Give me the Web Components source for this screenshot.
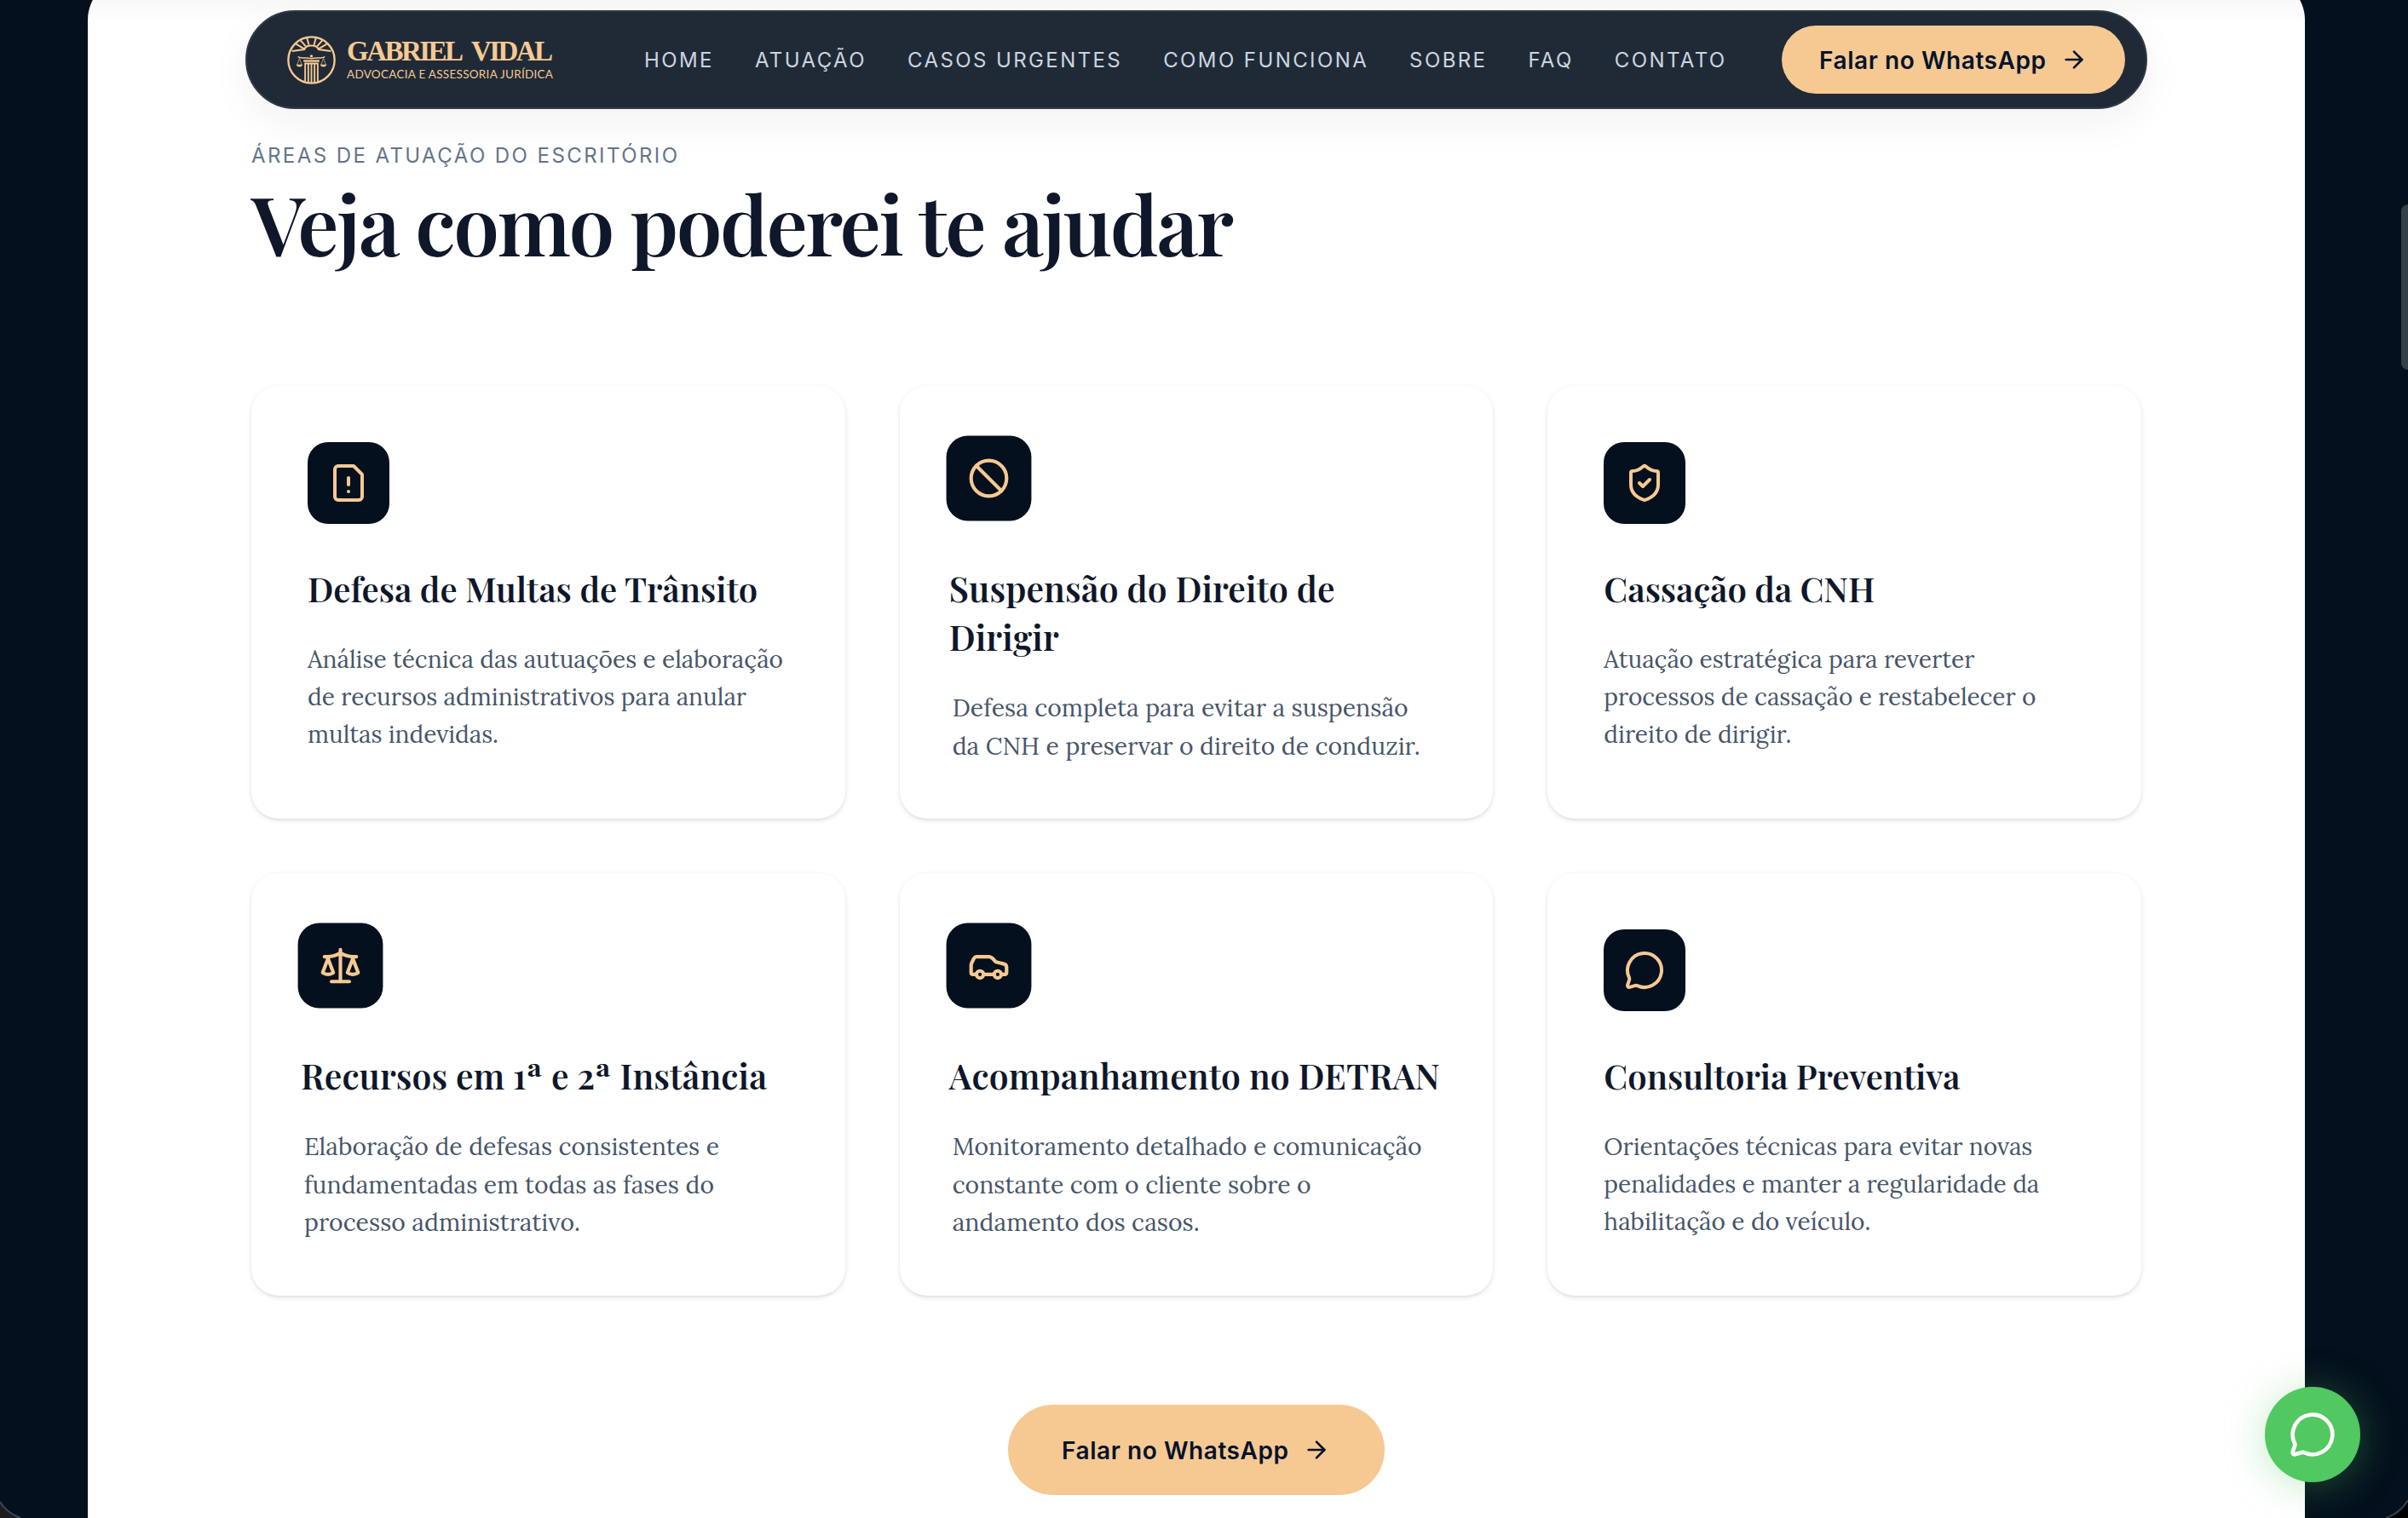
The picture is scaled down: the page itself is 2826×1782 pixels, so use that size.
<!DOCTYPE html>
<html lang="pt-BR">
<head>
<meta charset="utf-8">
<title>Gabriel Vidal – Advocacia e Assessoria Jurídica</title>
<style>
html,body{margin:0;height:1782px;overflow:hidden;background:#04101d}
body{position:relative;font-family:Inter,"Liberation Sans",sans-serif;
--serif:"Playfair Display","Liberation Serif",serif;--body:Lora,"Liberation Serif",serif;--gold:#f6c993;--ink:#0f172a}
</style>
</head>
<body>
<page-panel>
  <section-heading>
    <fit-line slot="eyebrow" w="500">ÁREAS DE ATUAÇÃO DO ESCRITÓRIO</fit-line>
    <fit-line slot="title" w="1153">Veja como poderei te ajudar</fit-line>
  </section-heading>
  <card-grid>
    <area-card icon="file">
      <fit-line slot="title" w="528">Defesa de Multas de Trânsito</fit-line>
      <fit-line w="558">Análise técnica das autuações e elaboração</fit-line>
      <fit-line w="515">de recursos administrativos para anular</fit-line>
      <fit-line w="224">multas indevidas.</fit-line>
    </area-card>
    <area-card icon="ban" lifted>
      <fit-line slot="title" w="453">Suspensão do Direito de</fit-line>
      <fit-line slot="title" w="129">Dirigir</fit-line>
      <fit-line w="535">Defesa completa para evitar a suspensão</fit-line>
      <fit-line w="549">da CNH e preservar o direito de conduzir.</fit-line>
    </area-card>
    <area-card icon="shield">
      <fit-line slot="title" w="318">Cassação da CNH</fit-line>
      <fit-line w="435">Atuação estratégica para reverter</fit-line>
      <fit-line w="507">processos de cassação e restabelecer o</fit-line>
      <fit-line w="220">direito de dirigir.</fit-line>
    </area-card>
    <area-card icon="scale" lifted>
      <fit-line slot="title" w="547">Recursos em 1ª e 2ª Instância</fit-line>
      <fit-line w="487">Elaboração de defesas consistentes e</fit-line>
      <fit-line w="481">fundamentadas em todas as fases do</fit-line>
      <fit-line w="324">processo administrativo.</fit-line>
    </area-card>
    <area-card icon="car" lifted>
      <fit-line slot="title" w="576">Acompanhamento no DETRAN</fit-line>
      <fit-line w="551">Monitoramento detalhado e comunicação</fit-line>
      <fit-line w="421">constante com o cliente sobre o</fit-line>
      <fit-line w="290">andamento dos casos.</fit-line>
    </area-card>
    <area-card icon="chat">
      <fit-line slot="title" w="418">Consultoria Preventiva</fit-line>
      <fit-line w="503">Orientações técnicas para evitar novas</fit-line>
      <fit-line w="511">penalidades e manter a regularidade da</fit-line>
      <fit-line w="313">habilitação e do veículo.</fit-line>
    </area-card>
  </card-grid>
  <cta-button large>Falar no WhatsApp</cta-button>
</page-panel>
<site-header>
  <brand-logo></brand-logo>
  <nav-menu>
    <span>HOME</span>
    <span>ATUAÇÃO</span>
    <span>CASOS URGENTES</span>
    <span>COMO FUNCIONA</span>
    <span>SOBRE</span>
    <span>FAQ</span>
    <span>CONTATO</span>
  </nav-menu>
  <cta-button>Falar no WhatsApp</cta-button>
</site-header>
<chat-fab></chat-fab>
<scroll-thumb></scroll-thumb>
<window-corners></window-corners>

<script>
const ICONS = {
  file: '<path d="M15 2H6a2 2 0 0 0-2 2v16a2 2 0 0 0 2 2h12a2 2 0 0 0 2-2V7Z"/><path d="M12 9v4"/><path d="M12 17h.01"/>',
  ban: '<circle cx="12" cy="12" r="10"/><path d="m4.9 4.9 14.2 14.2"/>',
  shield: '<path d="M20 13c0 5-3.5 7.5-7.66 8.95a1 1 0 0 1-.67-.01C7.5 20.5 4 18 4 13V6a1 1 0 0 1 1-1c2 0 4.5-1.2 6.24-2.72a1.17 1.17 0 0 1 1.52 0C14.51 3.81 17 5 19 5a1 1 0 0 1 1 1z"/><path d="m9 12 2 2 4-4"/>',
  scale: '<path d="m16 16 3-8 3 8c-.87.65-1.92 1-3 1s-2.13-.35-3-1Z"/><path d="m2 16 3-8 3 8c-.87.65-1.92 1-3 1s-2.13-.35-3-1Z"/><path d="M7 21h10"/><path d="M12 3v18"/><path d="M3 7h2c2 0 5-1 7-2 2 1 5 2 7 2h2"/>',
  car: '<path d="M19 17h2c.6 0 1-.4 1-1v-3c0-.9-.7-1.7-1.5-1.9C18.7 10.6 16 10 16 10s-1.3-1.4-2.2-2.3c-.5-.4-1.1-.7-1.8-.7H5c-.6 0-1.1.4-1.4.9l-1.4 2.9A3.7 3.7 0 0 0 2 12v4c0 .6.4 1 1 1h2"/><circle cx="7" cy="17" r="2"/><path d="M9 17h6"/><circle cx="17" cy="17" r="2"/>',
  chat: '<path d="M2.992 16.342a2 2 0 0 1 .094 1.167l-1.065 3.29a1 1 0 0 0 1.236 1.168l3.413-.998a2 2 0 0 1 1.099.092 10 10 0 1 0-4.777-4.719"/>',
  arrow: '<path d="M5 12h14"/><path d="m12 5 7 7-7 7"/>'
};
const icon = (name, size) => `<svg width="${size}" height="${size}" viewBox="0 0 24 24" fill="none" stroke="currentColor" stroke-width="2" stroke-linecap="round" stroke-linejoin="round">${ICONS[name]}</svg>`;
const define = (tag, css, html) => customElements.define(tag, class extends HTMLElement {
  constructor() {
    super();
    this.attachShadow({mode: 'open'}).innerHTML =
      `<style>${css}svg{display:block;flex:none}</style>` + (typeof html === 'function' ? html(this) : html);
  }
});

define('page-panel', `:host{display:flex;flex-direction:column;box-sizing:border-box;width:2602px;height:1831px;
  margin:-25px 0 0 103px;padding:192px 192px 0;border-radius:48px 48px 0 0;
  background:linear-gradient(#f8f8f8 25px,#fbfbfb 36px,#fff 52px)}`, '<slot></slot>');

define('section-heading', `:host{display:block}
  .e{font-size:24px;line-height:32px;color:#64748b}
  .t{margin-top:7px;font:600 96px/110px var(--serif);color:var(--ink)}`,
  '<div class="e"><slot name="eyebrow"></slot></div><div class="t"><slot name="title"></slot></div>');

define('card-grid', `:host{display:grid;grid-template-columns:repeat(3,minmax(0,1fr));grid-template-rows:508px 496px;gap:64px;margin-top:137px}`,
  '<slot></slot>');

define('area-card', `:host{display:block;box-sizing:border-box;padding:66px;border-radius:32px;background:#fff;
  box-shadow:0 2px 6px rgba(0,0,0,.1),0 2px 4px -2px rgba(0,0,0,.1)}
  .i{display:flex;align-items:center;justify-content:center;width:96px;height:96px;border-radius:24px;background:#04101d;color:var(--gold)}
  .t{margin-top:47px;font:600 40px/57px var(--serif);color:var(--ink)}
  .d{margin-top:33px;font:400 28px/44px var(--body);color:#475569}
  :host([lifted]) .i{transform:translate(-9.5px,-5.5px) scale(1.04)}
  :host([lifted]) .t{margin-left:-8px;font-size:40.8px}
  :host([lifted]) .d{margin-left:-4px;font-size:28.3px;line-height:44.5px}`,
  el => `<div class="i">${icon(el.getAttribute('icon'), 48)}</div><div class="t"><slot name="title"></slot></div><div class="d"><slot></slot></div>`);

define('cta-button', `:host{display:flex;align-items:center;box-sizing:border-box;gap:17px;width:403px;height:80px;padding-left:44px;
  border-radius:53px;background:var(--gold);color:#04132b;font-size:28px;font-weight:600;white-space:nowrap}
  fit-line{padding-top:1px}
  :host([large]){align-self:center;width:442px;height:106px;margin-top:128px;padding-left:63px}`,
  `<fit-line w="266"><slot></slot></fit-line>${icon('arrow', 32)}`);

define('site-header', `:host{position:absolute;left:288px;top:12px;display:flex;align-items:center;box-sizing:border-box;width:2232px;height:116px;
  padding:0 24px 0 47px;border:2px solid #303b48;border-radius:58px;background:#202a36;
  box-shadow:0 16px 50px rgba(0,0,0,.055)}
  ::slotted(cta-button){margin-left:auto}`, '<slot></slot>');

define('nav-menu', `:host{display:flex;gap:48px;margin-left:107px;padding-top:1px;font-size:24px;line-height:32px;letter-spacing:2.4px;white-space:nowrap;color:#cbd5e1}`, '<slot></slot>');

define('brand-logo', `:host{display:flex;align-items:center;gap:13px;color:var(--gold)}
  .c{padding-bottom:2px}
  .n{display:flex;gap:9px;width:242px;font:700 33px/33px "Liberation Serif",serif}
  .s{margin-top:2px;font:400 13.5px/16px Lato,sans-serif}`,
  `<svg width="57" height="57" viewBox="0 0 170 170" fill="none" stroke="currentColor" stroke-width="6">
    <circle cx="85" cy="85" r="81" stroke-width="7"/>
    <path d="M17 54l43-6c6-18 44-18 50 0l43 6"/>
    <path d="M31 29l29 17M47 16l18 21M69 7l7 25M101 7l-7 25M123 16l-18 21M139 29l-29 17"/>
    <path d="M38 73c7 8 33 2 47 7 14-5 40 1 47-7" stroke-width="4"/>
    <circle cx="85" cy="71" r="5" fill="currentColor" stroke="none"/>
    <path d="M43 79l-8 22M43 79l8 22M127 79l-8 22M127 79l8 22" stroke-width="2"/>
    <path d="M31 101h24q-3 8-12 8t-12-8zM115 101h24q-3 8-12 8t-12-8z" fill="currentColor" stroke="none"/>
    <path d="M57 88h56" stroke-width="7"/>
    <path d="M61 97h48M63 95v65M74 95v70M85 95v72M96 95v70M107 95v65" stroke-width="5.5"/>
  </svg>
  <div class="c"><div class="n"><fit-line w="137">GABRIEL</fit-line><fit-line w="96">VIDAL</fit-line></div><div class="s"><fit-line w="242">ADVOCACIA E ASSESSORIA JURÍDICA</fit-line></div></div>`);

define('chat-fab', `:host{position:absolute;left:2658px;top:1628px;display:flex;align-items:center;justify-content:center;width:112px;height:112px;
  border-radius:50%;background:#52c860;color:#fff;box-shadow:0 4px 48px rgba(82,200,96,.35)}`, icon('chat', 56));

define('scroll-thumb', `:host{position:absolute;left:2818px;top:240px;width:8px;height:194px;border-radius:8px 0 0 8px;background:#333f49}`, '');

define('window-corners', `:host{position:absolute;left:0;bottom:0;display:flex;justify-content:space-between;width:2826px;height:24px}`,
  `<svg width="28" height="24"><path d="M0 5Q8 18 24 24H0Z" fill="#1d1d20"/><path d="M0 5Q8 18 24 24" fill="none" stroke="#3e4852" stroke-width="2"/></svg>
   <svg width="28" height="24"><path d="M28 3Q19 18 2 24H28Z" fill="#000"/><path d="M28 3Q19 18 2 24" fill="none" stroke="#38414c" stroke-width="2"/></svg>`);

/* One line of text, tracked so that it spans exactly the width given in "w". */
customElements.define('fit-line', class extends HTMLElement {
  constructor() {
    super();
    this.attachShadow({mode: 'open'}).innerHTML =
      '<style>:host{display:block;white-space:nowrap}span{display:inline-block}</style><span><slot></slot></span>';
  }
  connectedCallback() { this.style.width = this.getAttribute('w') + 'px'; }
  fit() {
    const span = this.shadowRoot.querySelector('span');
    const host = this.getRootNode().host;
    const text = (this.textContent || host.textContent).trim();
    span.style.letterSpacing = '0';
    const spacing = (this.getAttribute('w') - span.getBoundingClientRect().width) / (text.length - 1);
    this.style.letterSpacing = spacing + 'px';
    span.style.letterSpacing = '';
  }
});
const fitAll = root => root.querySelectorAll('*').forEach(el => {
  if (el.localName === 'fit-line') el.fit();
  else if (el.shadowRoot) fitAll(el.shadowRoot);
});
fitAll(document);
</script>
</body>
</html>
